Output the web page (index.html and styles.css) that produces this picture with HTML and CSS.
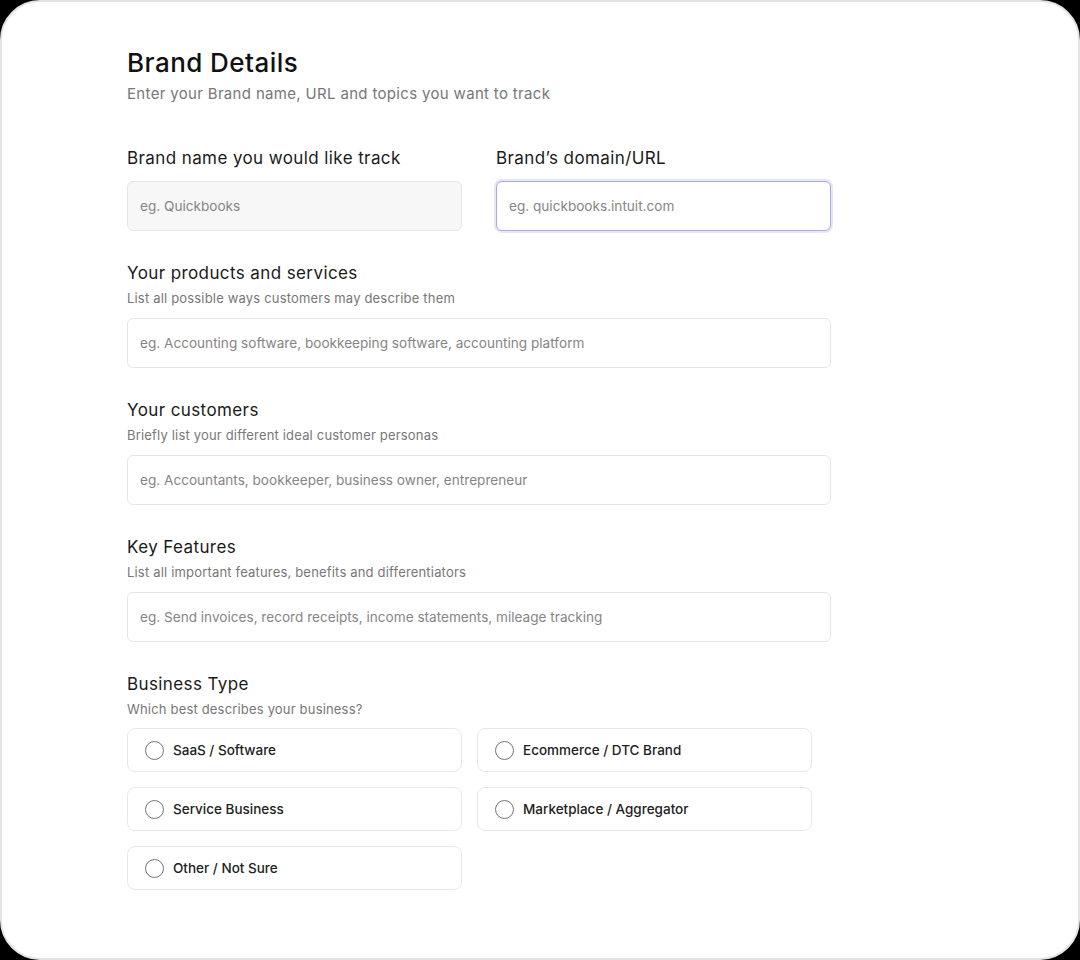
FILE: index.html
```html
<!DOCTYPE html>
<html lang="en">
<head>
    <meta charset="UTF-8">
    <title>Brand Details</title>
    <link rel="stylesheet" href="styles.css">
</head>
<body>
    <div class="card">
        <h1>Brand Details</h1>
        <p class="subtitle">Enter your Brand name, URL and topics you want to track</p>

        <div class="row-two">
            <div class="field">
                <label for="brand">Brand name you would like track</label>
                <input type="text" id="brand" class="input input-filled" placeholder="eg. Quickbooks">
            </div>
            <div class="field">
                <label for="domain">Brand’s domain/URL</label>
                <input type="text" id="domain" class="input input-focus" placeholder="eg. quickbooks.intuit.com">
            </div>
        </div>

        <div class="section">
            <label for="products">Your products and services</label>
            <p class="hint">List all possible ways customers may describe them</p>
            <input type="text" id="products" class="input" placeholder="eg. Accounting software, bookkeeping software, accounting platform">
        </div>

        <div class="section">
            <label for="customers">Your customers</label>
            <p class="hint">Briefly list your different ideal customer personas</p>
            <input type="text" id="customers" class="input" placeholder="eg. Accountants, bookkeeper, business owner, entrepreneur">
        </div>

        <div class="section">
            <label for="features">Key Features</label>
            <p class="hint">List all important features, benefits and differentiators</p>
            <input type="text" id="features" class="input" placeholder="eg. Send invoices, record receipts, income statements, mileage tracking">
        </div>

        <div class="section">
            <label>Business Type</label>
            <p class="hint">Which best describes your business?</p>
            <div class="options">
                <div class="option"><span class="radio"></span>SaaS / Software</div>
                <div class="option"><span class="radio"></span>Ecommerce / DTC Brand</div>
                <div class="option"><span class="radio"></span>Service Business</div>
                <div class="option"><span class="radio"></span>Marketplace / Aggregator</div>
                <div class="option"><span class="radio"></span>Other / Not Sure</div>
            </div>
        </div>
    </div>
</body>
</html>
```

FILE: styles.css
```css
html, body {
    margin: 0;
    padding: 0;
    background-color: #000;
}
body {
    font-family: Inter, "Noto Sans", Arial, sans-serif;
    color: #1a1a1a;
}
.card {
    box-sizing: border-box;
    width: 1080px;
    height: 960px;
    background-color: #fff;
    border: 2px solid #e4e4e4;
    border-radius: 40px;
    padding: 45px 0 0 125px;
}
h1 {
    margin: 0;
    font-size: 26px;
    line-height: 32px;
    font-weight: 500;
    color: #111;
    letter-spacing: 0.45px;
}
.subtitle {
    margin: 5px 0 0;
    font-size: 15px;
    line-height: 20px;
    color: #777;
    letter-spacing: 0.33px;
}
.row-two {
    display: flex;
    gap: 34px;
    width: 704px;
    margin-top: 43px;
}
.field {
    flex: 1;
    display: flex;
    flex-direction: column;
}
label {
    display: block;
    font-size: 17px;
    line-height: 22px;
    color: #1a1a1a;
    letter-spacing: 0.4px;
}
.field .input {
    margin-top: 12px;
}
.section {
    margin-top: 31px;
    width: 704px;
}
.hint {
    margin: 5px 0 0;
    font-size: 13px;
    line-height: 18px;
    color: #777;
    letter-spacing: 0.18px;
}
.section .input {
    margin-top: 11px;
}
.input {
    display: block;
    box-sizing: border-box;
    width: 100%;
    height: 50px;
    padding: 0 12px;
    border: 1px solid #e6e6e6;
    border-radius: 6px;
    background-color: #fff;
    font-family: inherit;
    font-size: 13.6px;
    color: #333;
    outline: none;
}
.input::placeholder {
    color: #858585;
}
.input-filled {
    background-color: #f7f7f7;
}
.input-focus {
    border-color: #a9aae6;
    box-shadow: 0 0 0 2px #e6e6f9;
}
.options {
    display: grid;
    grid-template-columns: 335px 335px;
    column-gap: 15px;
    row-gap: 15px;
    margin-top: 10px;
}
.option {
    box-sizing: border-box;
    height: 44px;
    display: flex;
    align-items: center;
    padding-left: 17px;
    border: 1px solid #e8e8e8;
    border-radius: 8px;
    font-size: 13.5px;
    font-weight: 500;
    color: #222;
}
.radio {
    box-sizing: border-box;
    width: 19px;
    height: 19px;
    border: 1.5px solid #747474;
    border-radius: 50%;
    margin-right: 9px;
}
```
